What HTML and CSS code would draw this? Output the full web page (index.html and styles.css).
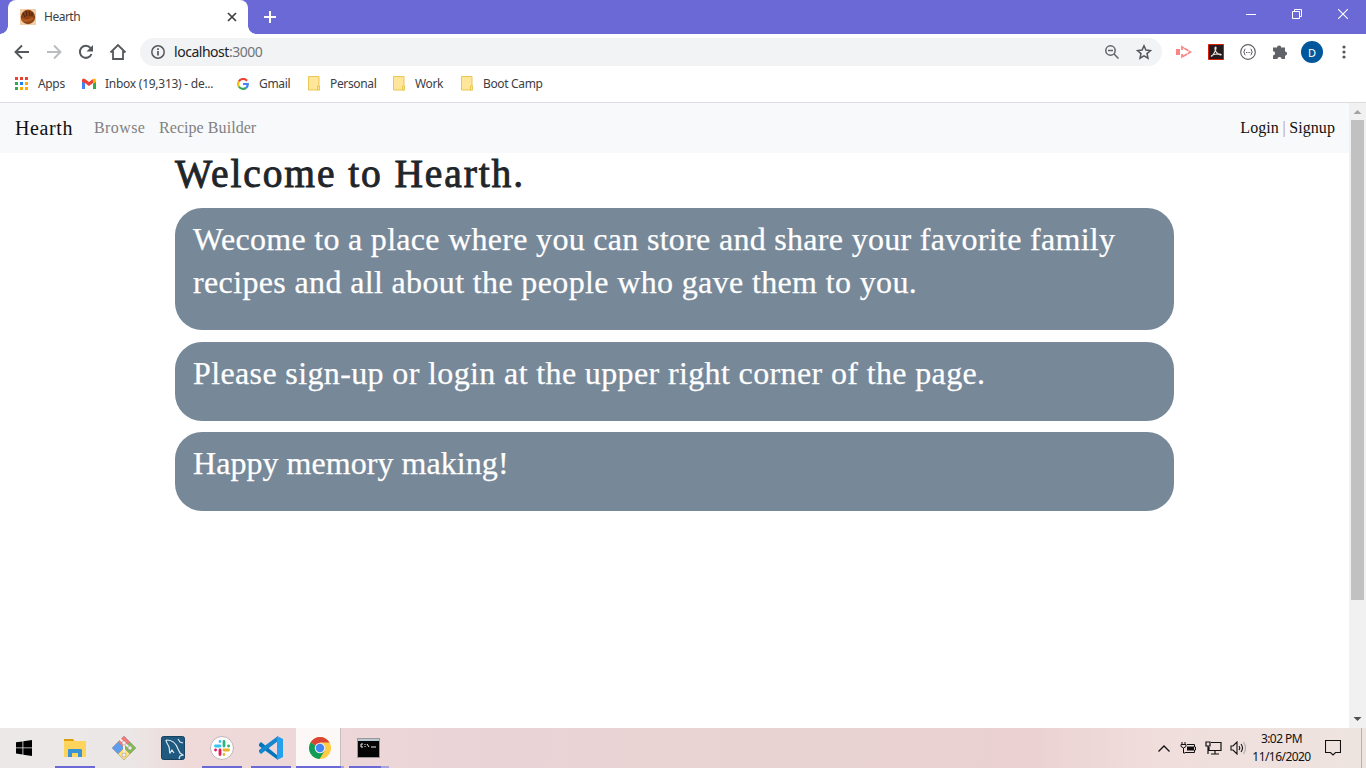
FILE: index.html
```html
<!DOCTYPE html>
<html lang="en">
<head>
<meta charset="utf-8">
<title>Hearth</title>
<link rel="stylesheet" href="styles.css">
</head>
<body>
<div class="screen">
  <header class="tabstrip">
    <div class="tab">
      <svg class="favicon" width="16" height="16" viewBox="0 0 16 16"><path fill="#f2cfa6" d="M0 0h16v16H0z"/><circle cx="8" cy="8" r="7.2" fill="#8d4215"/><path d="M2 10q5 4 11-1" stroke="#b05a20" stroke-width="2.5" fill="none"/><path d="M3 4l2 4M6 2l1 5M9 2l1 5M12 3v4" stroke="#43200f" stroke-width="1"/></svg>
      <span class="tab-title">Hearth</span>
      <svg width="10" height="10" viewBox="0 0 10 10" stroke="#3c4043" stroke-width="1.7"><path d="M1 1l8 8M9 1l-8 8"/></svg>
    </div>
    <svg class="newtab" width="12" height="12" viewBox="0 0 12 12" stroke="#fff" stroke-width="2"><path d="M6 0v12M0 6h12"/></svg>
    <div class="winctl">
      <svg width="10" height="10" viewBox="0 0 10 10" stroke="#fff"><path d="M0 5.5h10"/></svg>
      <svg width="10" height="10" viewBox="0 0 10 10" stroke="#fff" fill="none"><path d="M.5 2.500h7v7h-7zM2.500 2.500v-2h7v7h-2"/></svg>
      <svg width="10" height="10" viewBox="0 0 10 10" stroke="#fff" stroke-width="1.1"><path d="M0 0l10 10M10 0L0 10"/></svg>
    </div>
  </header>
  <div class="toolbar">
    <div class="navbtns">
      <svg width="16" height="16" viewBox="0 0 16 16" fill="none" stroke="#54585c" stroke-width="1.9"><path d="M15 8H2M8 1.500L1.500 8 8 14.500"/></svg>
      <svg width="16" height="16" viewBox="0 0 16 16" fill="none" stroke="#babcbe" stroke-width="1.9"><path d="M1 8h13M8 1.500L14.500 8 8 14.500"/></svg>
      <svg width="16" height="16" viewBox="0 0 16 16"><path d="M13.500 10A6 6 0 1 1 12.500 4" fill="none" stroke="#54585c" stroke-width="2"/><path d="M15 1v6.500H8.500z" fill="#54585c"/></svg>
      <svg width="18" height="18" viewBox="0 0 18 18" fill="none" stroke="#54585c" stroke-width="1.8"><path d="M1.500 9.500L9 2l7.500 7.500M4 8v8h10V8"/></svg>
    </div>
    <div class="omnibox">
      <svg width="14" height="14" viewBox="0 0 14 14" fill="none" stroke="#54585c" stroke-width="1.5"><circle cx="7" cy="7" r="6.200"/><path d="M7 6v4.500M7 3.200v1.700" stroke-width="1.700"/></svg>
      <span class="url">localhost<i>:3000</i></span>
      <svg class="mag" width="14" height="14" viewBox="0 0 14 14" fill="none" stroke="#5f6368" stroke-width="1.500"><circle cx="5.500" cy="5.500" r="4.700"/><path d="M3 5.500h5M9 9l4.500 4.500"/></svg>
      <svg width="16" height="16" viewBox="0 0 16 16" fill="none" stroke="#54585c" stroke-width="1.500"><path d="M8 1.800l1.900 4.300 4.600.4-3.500 3.100 1 4.600L8 11.800l-4 2.400 1-4.600L1.500 6.500l4.600-.4z"/></svg>
    </div>
    <div class="exts">
      <svg width="16" height="16" viewBox="0 0 16 16"><path d="M0 5h4v6H0z" fill="#fa8585"/><path d="M6 6V3l8.500 5L6 13v-3" fill="none" stroke="#fa8585" stroke-width="1.700" stroke-dasharray="5 .6"/></svg>
      <svg width="16" height="16" viewBox="0 0 16 16"><path d="M.5.500h15v15H.5z" fill="#251a1c" stroke="#d81e05"/><path d="M7.500 3c1.500 0 0 5-3.500 9-2 1-1-2 8-2 3 1 0 2-3-1S7 3 7.500 3z" fill="none" stroke="#e7dede" stroke-width="1.100"/></svg>
      <svg width="16" height="16" viewBox="0 0 16 16" fill="none" stroke="#5f6368"><circle cx="8" cy="8" r="7.300" stroke-width="1.200"/><path d="M5.500 5q-1.500 0-1 2l-1 1 1 1q-.5 2 1 2M10.500 5q1.500 0 1 2l1 1-1 1q.5 2-1 2M6 8.500h1M7.600 8.500h1M9.200 8.500h1"/></svg>
      <svg width="16" height="16" viewBox="0 0 16 16" fill="#5f6368"><path d="M1 3.500h4a2.100 2.100 0 1 1 4.200 0H13v4a2.100 2.100 0 1 1 0 4.200V15H9.600a2.100 2.100 0 0 0-4.200 0H1v-3.600a2.100 2.100 0 0 0 0-4.200z"/></svg>
      <span class="avatar">D</span>
      <svg width="4" height="14" viewBox="0 0 4 14" fill="#54585c"><circle cx="2" cy="2" r="1.600"/><circle cx="2" cy="7" r="1.600"/><circle cx="2" cy="12" r="1.600"/></svg>
    </div>
  </div>
  <nav class="bookmarks">
    <span class="bm apps"><svg width="13" height="13" viewBox="0 0 13 13"><path fill="#ea4335" d="M0 0h3v3H0zM5 0h3v3H5zM10 0h3v3h-3z"/><path fill="#34a853" d="M0 5h3v3H0zM0 10h3v3H0z"/><path fill="#1a82f0" d="M5 5h3v3H5z"/><path fill="#fbab05" d="M10 5h3v3h-3zM5 10h3v3H5zM10 10h3v3h-3z"/></svg>Apps</span>
    <span class="bm inbox"><svg width="14" height="11" viewBox="0 0 14 11"><path d="M0 2v9h3V4z" fill="#4285f4"/><path d="M11 4v7h3V2z" fill="#34a853"/><path d="M0 2Q.5-.5 3 1l4 3 4-3v4L7 8 3 5 0 4z" fill="#ea4335"/><path d="M11 1Q14-.5 14 2v2l-3 2z" fill="#fbbc04"/></svg>Inbox (19,313) - de...</span>
    <span class="bm gmail"><svg width="12" height="12" viewBox="0 0 12 12" fill="none" stroke-width="2.200"><path d="M10 2.800A5 5 0 0 0 1.800 3.500" stroke="#ea4335"/><path d="M1.800 3.500a5 5 0 0 0 0 5" stroke="#fbbc05"/><path d="M1.800 8.500a5 5 0 0 0 7.300 1.300" stroke="#34a853"/><path d="M9.100 9.800A4.500 4.500 0 0 0 10.800 6H6" stroke="#4285f4"/></svg>Gmail</span>
    <span class="bm personal"><svg width="13" height="15" viewBox="0 0 13 15"><path d="M.5.500h10.500v9.500l.5 1v3H.5z" fill="#ffe69a" stroke="#e9c750"/><path d="M9.500 14v-4h2v4z" fill="#ffe69a" stroke="#e9c750"/></svg>Personal</span>
    <span class="bm work"><svg width="13" height="15" viewBox="0 0 13 15"><path d="M.5.500h10.500v9.500l.5 1v3H.5z" fill="#ffe69a" stroke="#e9c750"/><path d="M9.500 14v-4h2v4z" fill="#ffe69a" stroke="#e9c750"/></svg>Work</span>
    <span class="bm camp"><svg width="13" height="15" viewBox="0 0 13 15"><path d="M.5.500h10.500v9.500l.5 1v3H.5z" fill="#ffe69a" stroke="#e9c750"/><path d="M9.500 14v-4h2v4z" fill="#ffe69a" stroke="#e9c750"/></svg>Boot Camp</span>
  </nav>
  <div class="viewport">
    <div class="page">
      <nav class="navbar"><a class="brand">Hearth</a><a class="browse">Browse</a><a class="builder">Recipe Builder</a><span class="account">Login <i>|</i> Signup</span></nav>
      <main>
        <h1>Welcome to Hearth.</h1>
        <div class="card intro"><p class="l1">Wecome to a place where you can store and share your favorite family</p><p class="l2">recipes and all about the people who gave them to you.</p></div>
        <div class="card"><p class="l3">Please sign-up or login at the upper right corner of the page.</p></div>
        <div class="card last"><p class="l4">Happy memory making!</p></div>
      </main>
    </div>
    <div class="scrollbar">
      <svg width="17" height="17" viewBox="0 0 17 17"><path d="M4.500 11h8l-4-4z" fill="#a3a3a3"/></svg>
      <div class="thumb"></div>
      <svg width="17" height="17" viewBox="0 0 17 17"><path d="M4.500 6h8l-4 4z" fill="#505050"/></svg>
    </div>
  </div>
  <footer class="taskbar">
    <div class="task start"><svg width="16" height="16" viewBox="0 0 16 16"><path d="M0 2.300l6.500-.9v6.100H0zM7.300 1.300L16 0v7.500H7.300zM0 8.300h6.500v6.200L0 13.600zM7.300 8.300H16V16l-8.700-1.300z"/></svg></div>
    <div class="task open"><svg width="22" height="20" viewBox="0 0 22 20"><path d="M0 1h9l2 2h11v16H0z" fill="#ffd45c"/><path d="M0 1h9l1 2H0z" fill="#dba008"/><path d="M4 19v-7q0-1 1-1h12q1 0 1 1v7h-4v-4H8v4z" fill="#3993d5"/></svg></div>
    <div class="task"><svg width="24" height="24" viewBox="0 0 24 24" stroke="#888" stroke-width=".5"><path d="M12 0l6 6-6 6-6-6z" fill="#f37979"/><path d="M18 6l6 6-6 6-6-6z" fill="#80bd4c"/><path d="M6 6l6 6-6 6-6-6z" fill="#5f9dec"/><path d="M12 12l6 6-6 6-6-6z" fill="#ffe178"/><path d="M8 3l4 4v12M12 7l6 5" fill="none" stroke="#f5eded" stroke-width="2"/><g fill="#f5eded"><circle cx="12" cy="7" r="2"/><circle cx="18" cy="12" r="2"/><circle cx="12" cy="19" r="2"/></g></svg></div>
    <div class="task"><svg width="24" height="24" viewBox="0 0 24 24"><rect x=".5" y=".5" width="23" height="23" rx="2" fill="#205980" stroke="#16415f"/><path d="M5 4c7 0 10 3 12 9l2 4 3 2-3 1-1 3M5 4c0 3 2 4 3 7s0 5 1 6l2-3 2 3M17 3l2 3 3 1" fill="none" stroke="#dce8ed" stroke-width="1.200"/></svg></div>
    <div class="task open"><svg width="24" height="24" viewBox="0 0 24 24" stroke-width="2.800" stroke-linecap="round"><circle cx="12" cy="12" r="11.500" fill="#fff" stroke="#bdb6b6" stroke-width="1"/><path d="M5.500 10H10M10 5.500v.1" stroke="#36c5f0"/><path d="M14 5.500V10M18.500 10h.1" stroke="#2eb67d"/><path d="M14 14h4.500M14 18.500v.1" stroke="#ecb22e"/><path d="M10 14v4.500M5.500 14h.1" stroke="#e01e5a"/></svg></div>
    <div class="task open"><svg width="24" height="24" viewBox="0 0 24 24"><path d="M0 8l2-2 17 14v4L0 10z" fill="#0075bd"/><path d="M0 16l2 2L19 5V0L0 14z" fill="#1687ce"/><path d="M18 0l6 3v18l-6 3z" fill="#26a0ed"/></svg></div>
    <div class="task open active"><svg width="22" height="22" viewBox="0 0 22 22"><circle cx="11" cy="11" r="11" fill="#ffcd42"/><path d="M11 11L1.500 5.500A11 11 0 0 1 20.500 5.500H11z" fill="#db4437"/><path d="M11 11L1.500 5.500A11 11 0 0 0 10.500 22l5-8z" fill="#109d58"/><circle cx="11" cy="11" r="5.300" fill="#eee"/><circle cx="11" cy="11" r="4.200" fill="#4285f4"/></svg></div>
    <div class="task open cmd"><svg width="23" height="20" viewBox="0 0 23 20"><path d="M.5.500h22v19H.5z" fill="#050505" stroke="#999"/><path d="M1 1h21v2H1z" fill="#b9c7d2"/><path d="M6 6H4v3h2M8 6v1M8 8v1M10 6l2 3M14 9h5" fill="none" stroke="#eee"/></svg></div>
    <div class="tray">
      <svg width="12" height="7" viewBox="0 0 12 7" fill="none" stroke="#111" stroke-width="1.300"><path d="M.5 6.500L6 1l5.500 5.500"/></svg>
      <svg width="17" height="12" viewBox="0 0 17 12"><path d="M7 4.500h7v4H7z" fill="#111"/><path d="M7 2.500h7.500V5h1v3h-1v2.500H5M2 0v2M5 0v2M1 2.500h5v2L3.500 6 1 4.500zM3.500 6v5H5" fill="none" stroke="#111"/></svg>
      <svg width="17" height="14" viewBox="0 0 17 14" fill="none" stroke="#111" stroke-width="1.200"><path d="M6 1.500h10v8H4V6M10 10v3M6 13h8M1 1h4v4H1zM3 5v8"/></svg>
      <svg width="17" height="14" viewBox="0 0 17 14" fill="none" stroke="#111" stroke-width="1.100"><path d="M1 5h2l4-4v12L3 9H1zM9 5q1.500 2 0 4M11 3q3 4 0 8"/><path d="M13.500 1q4 6 0 12" stroke="#aaa"/></svg>
      <div class="clock"><span>3:02 PM</span><span class="date">11/16/2020</span></div>
      <svg class="note" width="16" height="16" viewBox="0 0 16 16" fill="none" stroke="#111" stroke-width="1.100"><path d="M.5.500h15v12h-5L8 15l-2.500-2.500h-5z"/></svg>
      <i class="peek"></i>
    </div>
  </footer>
</div>
</body>
</html>
```
FILE: styles.css
```css
* { box-sizing: border-box; }
body { margin: 0; overflow: hidden; font-family: "Noto Sans", sans-serif; font-size: 12px; color: #3c4043; }
svg { display: block; flex: none; }
i { font-style: normal; }
.screen { width: 1366px; height: 768px; display: flex; flex-direction: column; background: #fff; }
.tabstrip { height: 34px; background: #6b69d6; display: flex; padding-left: 8px; flex: none; }
.tab { width: 240px; background: #fff; border-radius: 8px 8px 0 0; display: flex; align-items: center; padding: 0 11px 0 12px; position: relative; }
.tab::before, .tab::after { content: ""; position: absolute; bottom: 0; width: 8px; height: 8px; }
.tab::before { left: -8px; background: radial-gradient(circle at 0 0, #6b69d6 7.5px, #fff 8px); }
.tab::after { right: -8px; background: radial-gradient(circle at 100% 0, #6b69d6 7.500px, #fff 8px); }
.tab-title { margin: -1px 0 0 8px; flex: 1; letter-spacing: -.5px; }
.newtab { margin: 11px 0 0 16px; }
.winctl { margin: 9px 18px 0 auto; display: flex; gap: 36px; }
.toolbar { height: 36px; flex: none; display: flex; align-items: center; }
.navbtns { width: 140px; padding-left: 14px; display: flex; align-items: center; gap: 16px; }
.navbtns svg:last-child { margin-left: -1px; }
.omnibox { width: 1022px; height: 28px; background: #f1f3f4; border-radius: 14px; display: flex; align-items: center; padding: 0 10px 0 11px; }
.url { margin: -2px 0 0 9px; font-size: 14px; letter-spacing: -.47px; color: #202124; }
.url i { color: #70757a; }
.mag { margin: 0 17px 0 auto; }
.exts { flex: 1; display: flex; align-items: center; padding-left: 14px; gap: 16px; }
.avatar { width: 22px; height: 22px; margin-left: -3px; border-radius: 50%; background: #00579b; color: #fff; font-size: 11px; display: flex; align-items: center; justify-content: center; }
.exts svg:last-child { margin-left: 3px; }
.bookmarks { height: 33px; flex: none; display: flex; border-bottom: 1px solid #dadce0; padding: 0 0 5px 15px; align-items: center; }
.bm { display: flex; align-items: center; gap: 10px; letter-spacing: -.35px; white-space: nowrap; }
.apps { width: 67px; }
.inbox { width: 155px; gap: 9px; letter-spacing: -.26px; }
.gmail { width: 71px; }
.personal { width: 85px; gap: 9px; }
.work { width: 68px; gap: 9px; }
.camp { gap: 9px; }
.viewport { height: 625px; flex: none; display: flex; }
.page { width: 1349px; font-family: "Liberation Serif", serif; }
.navbar { height: 50px; background: #f8f9fa; display: flex; align-items: center; padding: 0 14px 0 15px; font-size: 16px; color: #808182; white-space: nowrap; }
.brand { width: 79px; font-size: 20px; letter-spacing: .6px; color: #111; }
.browse { width: 65px; letter-spacing: .4px; }
.builder { letter-spacing: .06px; }
.account { margin-left: auto; color: #111; word-spacing: -.6px; letter-spacing: .08px; }
.account i { color: #b99a75; }
main { width: 999px; margin-left: 175px; }
h1 { margin: 0; height: 55px; font-size: 39.500px; line-height: 42px; font-weight: 400; -webkit-text-stroke: .9px #212529; color: #212529; white-space: nowrap; letter-spacing: 1.890px; }
.card { height: 79px; border-radius: 27px; background: #778899; padding: 10px 18px; margin-bottom: 11px; color: #fff; font-size: 32px; line-height: 43px; white-space: nowrap; -webkit-text-stroke: .25px #fff; }
.intro { height: 122px; margin-bottom: 12px; }
.card p { margin: 0; }
.l1 { letter-spacing: .3px; }
.l2 { letter-spacing: .36px; }
.l3 { letter-spacing: .37px; }
.l4 { letter-spacing: .05px; }
.scrollbar { width: 17px; background: #f1f1f1; display: flex; flex-direction: column; }
.thumb { width: 13px; height: 480px; margin: 0 2px auto; background: #c1c1c1; }
.taskbar { height: 40px; flex: none; display: flex; background: linear-gradient(90deg, #ebe9e8 0, #ebe7e6 130px, #efd9d9 190px, #ecd6d7 380px, #e9d3d7 490px, #e9d4d3 680px, #e9d2d1 930px, #ebd1d1 1020px, #f0dedc 1160px, #eee4df 1366px); }
.task { width: 49px; display: flex; align-items: center; justify-content: center; position: relative; }
.task.start { width: 48px; margin-right: 2px; }
.open::after { content: ""; position: absolute; left: 5px; bottom: 0; width: 40px; height: 2px; background: #6b69d6; }
.active { background: #fdf8f8; margin-left: 1px; width: 45px; border-right: 1px solid #c9bdbd; padding-left: 3px; }
.active::after { left: 0; width: 48px; background: linear-gradient(90deg, #6b69d6 45px, #aaa2db 45px); }
.cmd { margin-left: 3px; }
.cmd::after { left: 5px; background: linear-gradient(90deg, #6b69d6 80%, #aaa2db 80%); }
.tray { margin-left: auto; display: flex; align-items: center; color: #111; }
.tray svg { margin-right: 8px; }
.tray svg:first-child { margin-right: 10px; }
.clock { width: 73px; margin-left: -10px; height: 36px; display: flex; flex-direction: column; align-items: center; line-height: 18px; letter-spacing: -.55px; }
.tray .note { margin: 0 20px 0 7px; }
.peek { width: 1px; height: 40px; background: #b7b0ad; margin-right: 4px; }
```
